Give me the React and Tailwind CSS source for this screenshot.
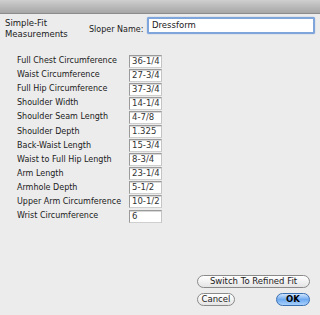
import React from 'react';

const rows = [
    ['Full Chest Circumference', '36-1/4'],
    ['Waist Circumference', '27-3/4'],
    ['Full Hip Circumference', '37-3/4'],
    ['Shoulder Width', '14-1/4'],
    ['Shoulder Seam Length', '4-7/8'],
    ['Shoulder Depth', '1.325'],
    ['Back-Waist Length', '15-3/4'],
    ['Waist to Full Hip Length', '8-3/4'],
    ['Arm Length', '23-1/4'],
    ['Armhole Depth', '5-1/2'],
    ['Upper Arm Circumference', '10-1/2'],
    ['Wrist Circumference', '6'],
];

const Field = ({ value }) => (
    <div className="w-[33px] h-[13px] bg-white border border-[#9a9a9a] border-b-[#cfcfcf] border-r-[#c4c4c4] pl-[2px] text-[8.5px] leading-[11px] text-[#333] shadow-[inset_0_1px_0_#d8d8d8]">
        {value}
    </div>
);

const Pill = ({ children, className = '', blue = false }) => (
    <div
        className={`h-[13px] rounded-full border flex items-center justify-center text-[8.5px] leading-none ${blue
            ? 'border-[#3a6fb0] bg-gradient-to-b from-[#cfe4fb] via-[#6eaaf0] to-[#a8d0fb] text-black font-bold'
            : 'border-[#8a8a8a] bg-gradient-to-b from-white via-[#f2f2f2] to-[#e4e4e4] text-[#222]'} ${className}`}
    >
        {children}
    </div>
);

export default function App() {
    return (
        <div className="w-[320px] h-[315px] bg-[#ececec] flex flex-col overflow-hidden text-[#1a1a1a]" style={{ fontFamily: '"DejaVu Sans", "Liberation Sans", sans-serif' }}>
            {/* Title bar */}
            <div className="h-[14px] bg-gradient-to-b from-[#cfcfcf] to-[#a6a6a6] border-b border-[#8c8c8c] shrink-0" />

            {/* Header */}
            <div className="flex items-start h-[22px] mt-[2px]">
                <div className="pl-[5px] pt-[2px] text-[8.5px] leading-[11px] w-[89px]">
                    <div>Simple-Fit</div>
                    <div>Measurements</div>
                </div>
                <div className="pt-[8px] text-[8px] leading-[11px] w-[58px]">Sloper Name:</div>
                <div className="mt-[1px] w-[168px] h-[17px] rounded-[2px] border-2 border-[#7fa6dc] bg-white flex items-center pl-[3px] text-[8.5px] shadow-[0_0_1px_#5a8ad0]">
                    Dressform
                </div>
            </div>

            {/* Measurements */}
            <div className="flex flex-col mt-[16px] pl-[17px]">
                {rows.map(([label, value]) => (
                    <div key={label} className="h-[14.1px] flex items-center">
                        <div className="w-[112px] text-[8px] leading-none">{label}</div>
                        <Field value={value} />
                    </div>
                ))}
            </div>

            {/* Buttons */}
            <div className="mt-auto mb-[9px] ml-[197px] w-[113px] flex flex-col gap-[5px]">
                <Pill>Switch To Refined Fit</Pill>
                <div className="flex justify-between">
                    <Pill className="w-[38px]">Cancel</Pill>
                    <Pill blue className="w-[34px]">OK</Pill>
                </div>
            </div>
        </div>
    );
}
